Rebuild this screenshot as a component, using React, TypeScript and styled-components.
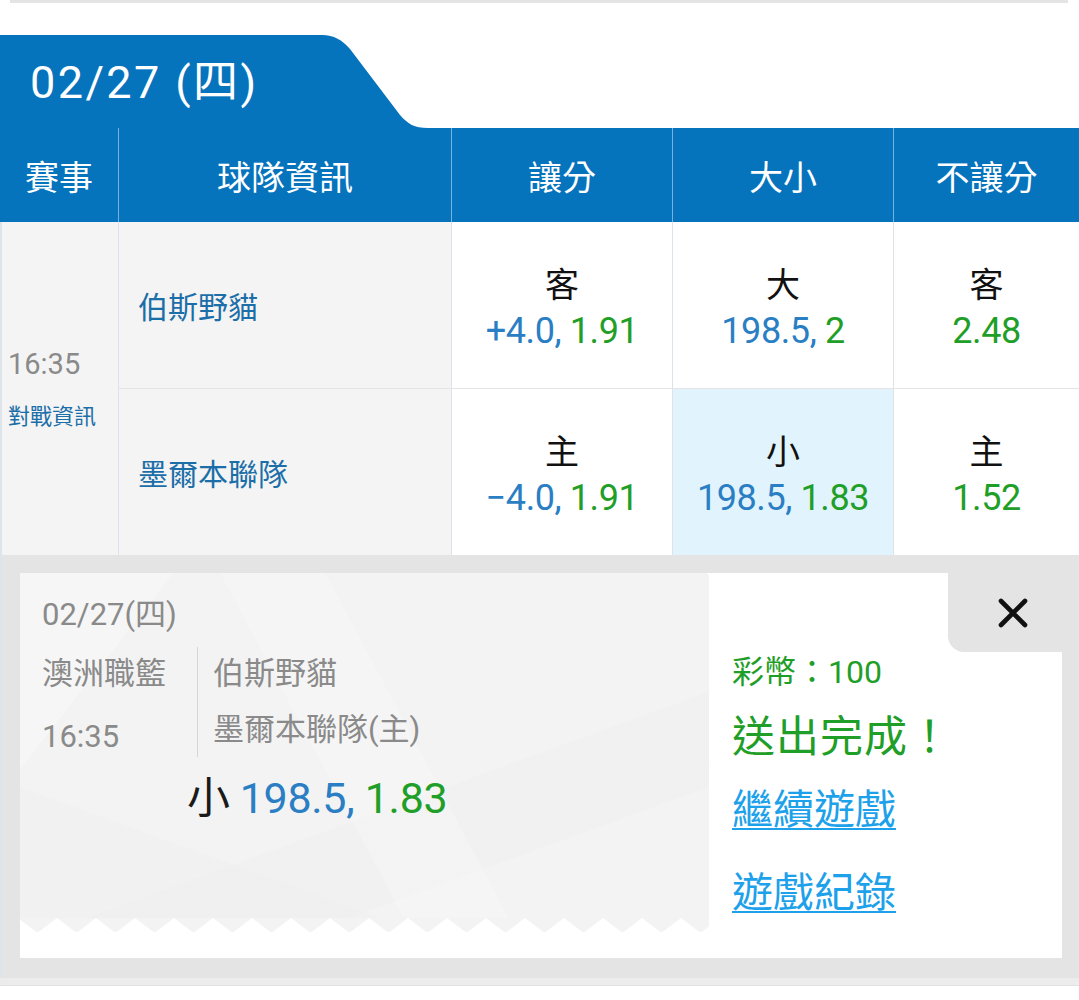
import styled, { createGlobalStyle } from 'styled-components'

const GlobalStyle = createGlobalStyle`
  html, body {
    margin: 0;
    padding: 0;
    background: #ffffff;
  }
  body {
    font-family: Roboto, "Noto Sans CJK TC", sans-serif;
    color: #222;
  }
`

const BLUE = '#0673bd'
const ODDS_BLUE = '#2a7ec3'
const GREEN = '#1f9e28'
const GRAY_TEXT = '#8a8a8a'

const Page = styled.div`
  width: 1079px;
  min-height: 1000px;
  overflow: hidden;
`

const TopEdge = styled.div`
  height: 3px;
  margin: 0 11px 32px 10px;
  background: #e4e4e4;
`

const DateTabRow = styled.div`
  display: flex;
  height: 93px;
`

const DateTab = styled.div`
  width: 300px;
  display: flex;
  align-items: center;
  padding: 0 0 6px 30px;
  box-sizing: border-box;
  background: ${BLUE};
  color: #fff;
  font-size: 45px;
  letter-spacing: 2.4px;
  white-space: nowrap;
`

const TabSlope = styled.svg`
  display: block;
  width: 130px;
  height: 93px;
`

const Table = styled.div`
  display: grid;
  grid-template-columns: 118px 333px 221px 221px 1fr;
  grid-template-rows: 94px 167px 166px;
`

const HeadCell = styled.div<{ $first?: boolean }>`
  display: flex;
  align-items: center;
  justify-content: center;
  background: ${BLUE};
  color: #fff;
  font-size: 34px;
  border-left: ${({ $first }) => ($first ? 'none' : '1px solid rgba(255, 255, 255, 0.45)')};
`

const TimeCell = styled.div`
  grid-row: 2 / span 2;
  display: flex;
  flex-direction: column;
  justify-content: center;
  padding-left: 6px;
  background: #f4f4f4;
  border-left: 2px solid #dde4ea;
`

const Time = styled.div`
  font-size: 29px;
  color: ${GRAY_TEXT};
  line-height: 34px;
`

const MatchInfo = styled.div`
  margin-top: 22px;
  font-size: 22px;
  color: #1b6ea8;
  line-height: 28px;
  white-space: nowrap;
`

const TeamCell = styled.div<{ $last?: boolean }>`
  display: flex;
  align-items: center;
  padding-left: 19px;
  background: #f4f4f4;
  border-left: 1px solid #dde3ea;
  border-bottom: ${({ $last }) => ($last ? 'none' : '1px solid #e4e4e4')};
  font-size: 30px;
  color: #1b6ea8;
`

const BetCell = styled.div<{ $selected?: boolean; $last?: boolean }>`
  display: flex;
  flex-direction: column;
  align-items: center;
  justify-content: center;
  padding-top: 6px;
  background: ${({ $selected }) => ($selected ? '#e1f3fd' : '#fff')};
  border-left: 1px solid #dde3ea;
  border-bottom: ${({ $last }) => ($last ? 'none' : '1px solid #e4e4e4')};
  font-size: 36px;
  line-height: 46px;
`

const BetLabel = styled.div`
  color: #111;
  font-size: 34px;
`

const Odds = styled.div`
  letter-spacing: -0.4px;
`

const Line = styled.span`
  color: ${ODDS_BLUE};
`

const Price = styled.span`
  color: ${GREEN};
`

const ResultPanel = styled.div`
  background: #e4e4e4;
  padding: 18px 17px 20px 18px;
  border-left: 2px solid #dde4ea;
`

const Card = styled.div`
  display: flex;
  background: #fff;
  height: 385px;
`

const Ticket = styled.div`
  width: 689px;
  display: flex;
  flex-direction: column;
`

const TicketBody = styled.div`
  height: 345px;
  box-sizing: border-box;
  padding: 24px 0 0 22px;
  border-top-right-radius: 4px;
  background:
    linear-gradient(128deg, rgba(255, 255, 255, 0.25) 0 16%, transparent 16% 100%),
    linear-gradient(62deg, transparent 0 44%, rgba(255, 255, 255, 0.18) 44% 56%, transparent 56%),
    linear-gradient(160deg, transparent 0 62%, rgba(236, 236, 236, 0.3) 62% 78%, transparent 78%),
    linear-gradient(20deg, rgba(238, 238, 238, 0.35) 0 22%, transparent 22% 100%),
    #f3f3f3;
  color: ${GRAY_TEXT};
`

const TicketDate = styled.div`
  font-size: 31px;
  line-height: 36px;
`

const MatchRow = styled.div`
  display: flex;
  margin-top: 14px;
  height: 110px;
`

const LeagueCol = styled.div`
  width: 155px;
  display: flex;
  flex-direction: column;
  gap: 23px;
  padding-top: 7px;
  border-right: 1px solid #d6d6d6;
  font-size: 31px;
  line-height: 40px;
`

const TeamsCol = styled.div`
  display: flex;
  flex-direction: column;
  gap: 16px;
  padding: 7px 0 0 15px;
  font-size: 31px;
  line-height: 40px;
  white-space: nowrap;
`

const PickLine = styled.div`
  margin: 16px 0 0 145px;
  font-size: 43px;
  line-height: 50px;
  letter-spacing: -0.3px;
`

const PickSide = styled.span`
  color: #1a1a1a;
  margin-right: 10px;
`

const ZigZag = styled.svg`
  display: block;
  width: 689px;
  height: 14px;
`

const Side = styled.div`
  flex: 1;
  display: flex;
  flex-direction: column;
`

const CloseRow = styled.div`
  display: flex;
  justify-content: flex-end;
`

const CloseTab = styled.button`
  width: 114px;
  height: 79px;
  border: none;
  padding: 0 0 0 16px;
  background: #e4e4e4;
  border-bottom-left-radius: 16px;
  display: flex;
  align-items: center;
  justify-content: center;
  cursor: pointer;
`

const SideBody = styled.div`
  display: flex;
  flex-direction: column;
  align-items: flex-start;
  padding-left: 23px;
`

const Coins = styled.div`
  font-size: 32px;
  line-height: 40px;
  color: ${GREEN};
  white-space: nowrap;
`

const Done = styled.div`
  margin-top: 17px;
  font-size: 43px;
  line-height: 56px;
  color: ${GREEN};
  letter-spacing: 1px;
  white-space: nowrap;
`

const ActionLink = styled.a<{ $gap: number }>`
  margin-top: ${({ $gap }) => $gap}px;
  font-size: 41px;
  line-height: 50px;
  color: #1da1ea;
  text-decoration: underline;
  text-underline-offset: 4px;
  text-decoration-thickness: 2px;
  cursor: pointer;
  white-space: nowrap;
`

const BottomStrip = styled.div`
  height: 7px;
  background: #ececec;
  border-bottom: 1px solid #e2e2e2;
`

const rows = [
  {
    team: '伯斯野貓',
    spread: { label: '客', line: '+4.0', price: '1.91' },
    total: { label: '大', line: '198.5', price: '2' },
    money: { label: '客', price: '2.48' },
  },
  {
    team: '墨爾本聯隊',
    spread: { label: '主', line: '\u22124.0', price: '1.91' },
    total: { label: '小', line: '198.5', price: '1.83', selected: true },
    money: { label: '主', price: '1.52' },
  },
]

const headers = ['賽事', '球隊資訊', '讓分', '大小', '不讓分']

export default function App() {
  return (
    <Page>
      <GlobalStyle />
      <TopEdge />
      <DateTabRow>
        <DateTab>02/27 (四)</DateTab>
        <TabSlope viewBox="0 0 130 93">
          <path d="M0 0 H22 C34 0 42 5 50 14 L100 80 C108 89 114 93 128 93 H0 Z" fill={BLUE} />
        </TabSlope>
      </DateTabRow>
      <Table>
        {headers.map((h, i) => (
          <HeadCell key={h} $first={i === 0}>
            {h}
          </HeadCell>
        ))}
        {rows.map((r, i) => {
          const last = i === rows.length - 1
          return [
            i === 0 ? (
              <TimeCell key="time">
                <Time>16:35</Time>
                <MatchInfo>對戰資訊</MatchInfo>
              </TimeCell>
            ) : null,
            <TeamCell key={`team-${i}`} $last={last}>
              {r.team}
            </TeamCell>,
            <BetCell key={`spread-${i}`} $last={last}>
              <BetLabel>{r.spread.label}</BetLabel>
              <Odds>
                <Line>{r.spread.line}, </Line>
                <Price>{r.spread.price}</Price>
              </Odds>
            </BetCell>,
            <BetCell key={`total-${i}`} $last={last} $selected={r.total.selected}>
              <BetLabel>{r.total.label}</BetLabel>
              <Odds>
                <Line>{r.total.line}, </Line>
                <Price>{r.total.price}</Price>
              </Odds>
            </BetCell>,
            <BetCell key={`money-${i}`} $last={last}>
              <BetLabel>{r.money.label}</BetLabel>
              <Odds>
                <Price>{r.money.price}</Price>
              </Odds>
            </BetCell>,
          ]
        })}
      </Table>
      <ResultPanel>
        <Card>
          <Ticket>
            <TicketBody>
              <TicketDate>02/27(四)</TicketDate>
              <MatchRow>
                <LeagueCol>
                  <div>澳洲職籃</div>
                  <div>16:35</div>
                </LeagueCol>
                <TeamsCol>
                  <div>伯斯野貓</div>
                  <div>墨爾本聯隊(主)</div>
                </TeamsCol>
              </MatchRow>
              <PickLine>
                <PickSide>小</PickSide>
                <Line>198.5, </Line>
                <Price>1.83</Price>
              </PickLine>
            </TicketBody>
            <ZigZag viewBox="0 0 689 14" preserveAspectRatio="none">
              <defs>
                <pattern id="teeth" width="39" height="14" patternUnits="userSpaceOnUse" x="-2">
                  <path d="M0 0 H39 L22 13 Q19.5 15 17 13 Z" fill="#f3f3f3" />
                </pattern>
              </defs>
              <rect width="689" height="14" fill="url(#teeth)" />
            </ZigZag>
          </Ticket>
          <Side>
            <CloseRow>
              <CloseTab aria-label="close">
                <svg width="30" height="30" viewBox="0 0 30 30">
                  <path d="M3 3 L27 27 M27 3 L3 27" stroke="#111" strokeWidth="4.6" strokeLinecap="round" />
                </svg>
              </CloseTab>
            </CloseRow>
            <SideBody>
              <Coins>彩幣：100</Coins>
              <Done>送出完成！</Done>
              <ActionLink $gap={20}>繼續遊戲</ActionLink>
              <ActionLink $gap={33}>遊戲紀錄</ActionLink>
            </SideBody>
          </Side>
        </Card>
      </ResultPanel>
      <BottomStrip />
    </Page>
  )
}
